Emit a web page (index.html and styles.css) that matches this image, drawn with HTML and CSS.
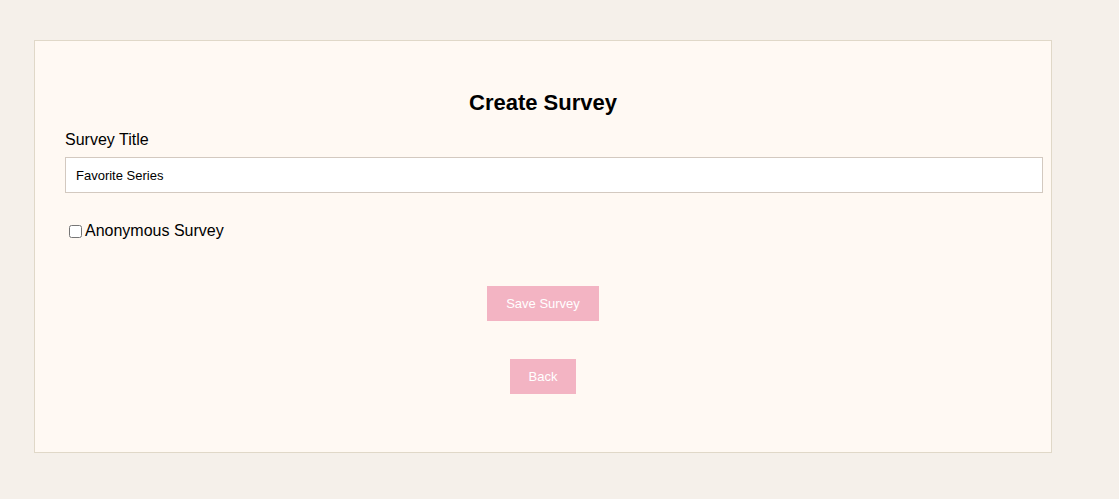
FILE: index.html
```html
<!DOCTYPE html>
<html>
<head>
<meta charset="utf-8">
<title>Create Survey</title>
<link rel="stylesheet" href="styles.css">
</head>
<body>
<div class="card">
  <h2 class="heading">Create Survey</h2>
  <label class="field-label" for="title">Survey Title</label>
  <input class="text-input" id="title" type="text" value="Favorite Series">
  <div class="check-row">
    <input type="checkbox" class="check" id="anon">
    <label for="anon" class="check-label">Anonymous Survey</label>
  </div>
  <div class="actions">
    <button class="btn">Save Survey</button>
    <button class="btn">Back</button>
  </div>
</div>
</body>
</html>
```
FILE: styles.css
```css
html, body {
  margin: 0;
  padding: 0;
}
body {
  background: #f5f0ea;
  font-family: "Liberation Sans", Arial, sans-serif;
  color: #000;
  padding: 40px 0 0 34px;
}
.card {
  width: 956px;
  background: #fff9f3;
  border: 1px solid #e0d8c8;
  padding: 30px;
}
.heading {
  font-size: 22px;
  font-weight: bold;
  text-align: center;
  margin: 19px 0 16px;
  line-height: 25px;
}
.field-label {
  display: block;
  font-size: 16px;
  line-height: 18px;
  margin-bottom: 8px;
}
.text-input {
  display: block;
  width: 956px;
  height: 14px;
  padding: 10px;
  margin: 0;
  border: 1px solid #d3c9c0;
  background: #fff;
  font-family: "Liberation Sans", Arial, sans-serif;
  font-size: 13px;
  color: #000;
  outline: none;
}
.check-row {
  display: flex;
  align-items: center;
  margin-top: 29px;
  height: 18px;
}
.check {
  margin: 0 3px 0 4px;
  width: 13px;
  height: 13px;
}
.check-label {
  font-size: 16px;
  line-height: 18px;
}
.actions {
  display: flex;
  flex-direction: column;
  align-items: center;
  gap: 38px;
  margin-top: 46px;
  margin-bottom: 28px;
}
.btn {
  background: #f3b4c3;
  border: 1px solid #f3b4c3;
  color: #fff;
  font-family: "Liberation Sans", Arial, sans-serif;
  font-size: 13px;
  line-height: 15px;
  padding: 9px 18px;
  cursor: pointer;
}
```
